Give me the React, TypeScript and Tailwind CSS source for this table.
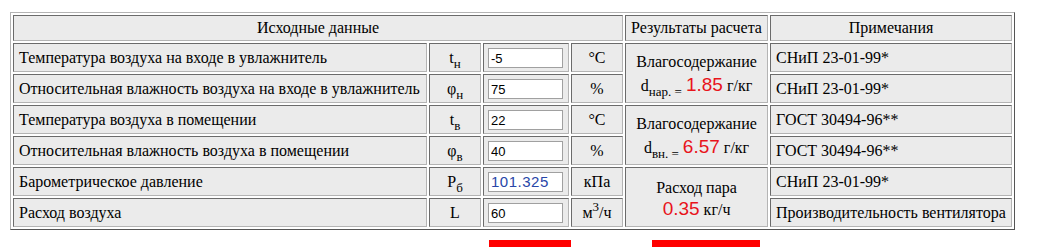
import React from 'react';

const serif = 'font-[family-name:Liberation_Serif,Times_New_Roman,serif]';
const sans = 'font-[family-name:Liberation_Sans,Arial,sans-serif]';

const cell =
  'bg-[#ebebeb] border border-t-[#6b6b6b] border-l-[#6b6b6b] border-b-[#b4b4b4] border-r-[#b4b4b4] p-0';

const inputCls = `w-[75px] h-[20px] border border-[#a0a0a0] bg-white px-[2px] outline-none ${sans}`;

const sub = 'text-[13px] -bottom-[5px]';

type Row = {
  label: string;
  sym: React.ReactNode;
  value: string;
  unit: React.ReactNode;
  note: string;
  blue?: boolean;
};

const rows: Row[] = [
  { label: 'Температура воздуха на входе в увлажнитель', sym: <>t<sub className={sub}>н</sub></>, value: '-5', unit: '°C', note: 'СНиП 23-01-99*' },
  { label: 'Относительная влажность воздуха на входе в увлажнитель', sym: <>φ<sub className={sub}>н</sub></>, value: '75', unit: '%', note: 'СНиП 23-01-99*' },
  { label: 'Температура воздуха в помещении', sym: <>t<sub className={sub}>в</sub></>, value: '22', unit: '°C', note: 'ГОСТ 30494-96**' },
  { label: 'Относительная влажность воздуха в помещении', sym: <>φ<sub className={sub}>в</sub></>, value: '40', unit: '%', note: 'ГОСТ 30494-96**' },
  { label: 'Барометрическое давление', sym: <>P<sub className={sub}>б</sub></>, value: '101.325', unit: 'кПа', note: 'СНиП 23-01-99*', blue: true },
  { label: 'Расход воздуха', sym: 'L', value: '60', unit: <>м<sup className="text-[13px]">3</sup>/ч</>, note: 'Производительность вентилятора' },
];

function Result({ index }: { index: number }) {
  const red = `text-[#e8141b] text-[19px] ${sans}`;
  if (index === 0)
    return (
      <div className="leading-[23px]">
        <div>Влагосодержание</div>
        <div>
          d<sub className={sub}>нар. =</sub> <span className={red}>1.85</span> г/кг
        </div>
      </div>
    );
  if (index === 2)
    return (
      <div className="leading-[23px]">
        <div>Влагосодержание</div>
        <div>
          d<sub className={sub}>вн. =</sub> <span className={red}>6.57</span> г/кг
        </div>
      </div>
    );
  return (
    <div className="leading-[21px] pt-[2px]">
      <div>Расход пара</div>
      <div>
        <span className={red}>0.35</span> кг/ч
      </div>
    </div>
  );
}

export default function App() {
  return (
    <div className={`bg-white w-[1040px] h-[247px] overflow-hidden pt-[12px] pl-[10px] ${serif} text-[16px] text-black`}>
      <table className="table-fixed w-[1005px] border-separate border-spacing-[2px] border border-t-[#b4b4b4] border-l-[#b4b4b4] border-b-[#555] border-r-[#555]">
        <colgroup>
          <col className="w-[414px]" />
          <col className="w-[52px]" />
          <col className="w-[86px]" />
          <col className="w-[52px]" />
          <col className="w-[143px]" />
          <col className="w-[242px]" />
        </colgroup>
        <thead>
          <tr>
            <th colSpan={4} className={`${cell} h-[24px] font-normal text-center`}>Исходные данные</th>
            <th className={`${cell} h-[24px] font-normal text-center`}>Результаты расчета</th>
            <th className={`${cell} h-[24px] font-normal text-center`}>Примечания</th>
          </tr>
        </thead>
        <tbody>
          {rows.map((r, i) => (
            <tr key={i}>
              <td className={`${cell} h-[29px] pl-[5px] whitespace-nowrap`}>{r.label}</td>
              <td className={`${cell} h-[29px] text-center`}>{r.sym}</td>
              <td className={`${cell} h-[29px] pl-[4px]`}>
                <input
                  readOnly
                  value={r.value}
                  className={`${inputCls} ${r.blue ? 'text-[#2846a8] text-[15px] tracking-[0.5px]' : 'text-black text-[13px]'}`}
                />
              </td>
              <td className={`${cell} h-[29px] text-center`}>{r.unit}</td>
              {i % 2 === 0 && (
                <td rowSpan={2} className={`${cell} text-center align-middle`}>
                  <Result index={i} />
                </td>
              )}
              <td className={`${cell} h-[29px] pl-[5px] whitespace-nowrap`}>{r.note}</td>
            </tr>
          ))}
        </tbody>
      </table>
      <div className="flex mt-[10px] pl-[479px] gap-[81px]">
        <div className="w-[82px] h-[10px] bg-[#ff0000]" />
        <div className="w-[108px] h-[10px] bg-[#ff0000]" />
      </div>
    </div>
  );
}
